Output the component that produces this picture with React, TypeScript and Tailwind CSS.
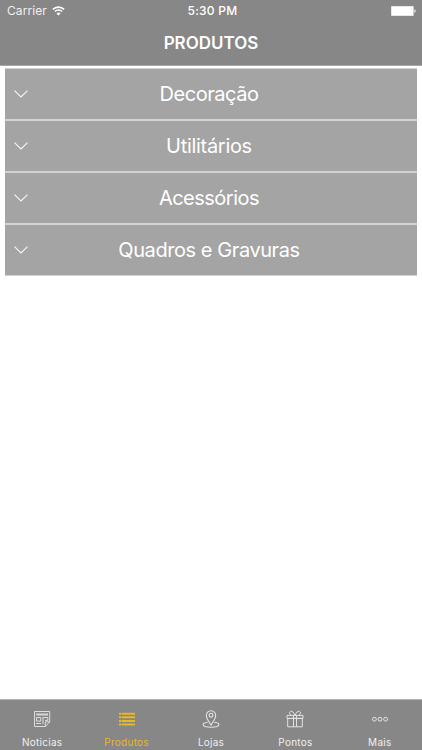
import React from "react";

interface Category {
  name: string;
  className: string;
}

interface Tab {
  label: string;
  icon: React.ReactNode;
  active?: boolean;
}

const WifiIcon = () => (
  <svg width="13" height="10" viewBox="0 0 13 10" fill="none" stroke="white">
    <path d="M0.9 3.4a8 8 0 0 1 11.2 0" strokeWidth="1.6" />
    <path d="M2.9 5.5a5.1 5.1 0 0 1 7.2 0" strokeWidth="1.5" />
    <path d="M6.5 9.4L4.5 7.4a2.9 2.9 0 0 1 4 0z" fill="white" stroke="none" />
  </svg>
);

const BatteryIcon = () => (
  <svg width="25" height="10" viewBox="0 0 25 10" fill="white">
    <rect x="0" y="0" width="22.8" height="10" rx="0.8" opacity="0.75" />
    <rect x="0.8" y="0.8" width="21.2" height="8.4" />
    <path d="M23.4 3.2c1.6.5 1.6 3.1 0 3.6z" />
  </svg>
);

const ChevronIcon = () => (
  <svg width="14" height="8" viewBox="0 0 14 8" fill="none" stroke="white" strokeOpacity="0.9">
    <path d="M0.5 0.6L7 7l6.5-6.4" strokeWidth="1.15" />
  </svg>
);

const NewsIcon = () => (
  <svg width="18" height="18" viewBox="0 0 18 18" fill="none" stroke="#e6e6e6" strokeWidth="0.9">
    <path d="M1.5 1.5h15.2v10.4l-4.4 4.6H1.5z" />
    <path d="M16.7 11.9h-4.4v4.6" />
    <path d="M3.2 4.5h11.8" strokeWidth="2" strokeOpacity="0.85" />
    <path d="M3.5 7.5h4.3v3.6H3.5zM3 13.5h5.2M10 7v7.2M10 7.5h4.8v2.9H12" />
  </svg>
);

const ListIcon = () => (
  <svg width="18" height="18" viewBox="0 0 18 18" stroke="#e6b928" strokeWidth="2">
    <path d="M1 3.7h2.2M3.8 3.7H17M1 7.3h2.2M3.8 7.3H17M1 11h2.2M3.8 11H17M1 14.6h2.2M3.8 14.6H17" />
  </svg>
);

const PinIcon = () => (
  <svg width="18" height="18" viewBox="0 0 18 18" fill="none" stroke="#e6e6e6" strokeWidth="1.05">
    <path d="M9 14.9C7.2 12 4.3 8.6 4.3 5.4a4.7 4.7 0 0 1 9.4 0C13.7 8.6 10.8 12 9 14.9z" />
    <circle cx="9" cy="5.2" r="1.9" />
    <path d="M5.7 12.2c-2.7.3-4.6 1.1-4.6 2.3 0 1.6 3.5 2.7 7.9 2.7s7.9-1.1 7.9-2.7c0-1.2-1.9-2-4.6-2.3" />
  </svg>
);

const GiftIcon = () => (
  <svg width="18" height="18" viewBox="0 0 18 18" fill="none" stroke="#e6e6e6" strokeWidth="0.95">
    <path d="M1 5.4h16v3H1zM1.7 8.4h14.6v8.4H1.7zM7.5 5.4v11.4M10.5 5.4v11.4" />
    <path d="M8.7 5.2C8.1 2.4 6.2.8 4.5 1.4 2.9 2 3.4 4.5 5 5.2M9.3 5.2c.6-2.8 2.5-4.4 4.2-3.8 1.6.6 1.1 3.1-.5 3.8" />
  </svg>
);

const MoreIcon = () => (
  <svg width="18" height="18" viewBox="0 0 18 18" fill="none" stroke="#e6e6e6" strokeWidth="1">
    <circle cx="3.4" cy="9.2" r="1.9" />
    <circle cx="9" cy="9.2" r="1.9" />
    <circle cx="14.6" cy="9.2" r="1.9" />
  </svg>
);

const categories: Category[] = [
  { name: "Decoração", className: "tracking-[-0.48px]" },
  { name: "Utilitários", className: "tracking-[-0.3px]" },
  { name: "Acessórios", className: "tracking-[-0.5px]" },
  { name: "Quadros e Gravuras", className: "tracking-[-0.43px]" },
];

const tabs: Tab[] = [
  { label: "Noticias", icon: <NewsIcon /> },
  { label: "Produtos", icon: <ListIcon />, active: true },
  { label: "Lojas", icon: <PinIcon /> },
  { label: "Pontos", icon: <GiftIcon /> },
  { label: "Mais", icon: <MoreIcon /> },
];

const StatusBar = () => (
  <div className="grid h-[22px] grid-cols-3 items-center pr-[6px] pl-[7px] text-[12px] leading-none">
    <div className="flex items-center gap-[5px]">
      <span className="tracking-[0.08px] text-[#f0f0f0]">Carrier</span>
      <WifiIcon />
    </div>
    <span className="pl-[2px] text-center font-medium tracking-[0.25px]">5:30 PM</span>
    <div className="flex justify-end">
      <BatteryIcon />
    </div>
  </div>
);

const App: React.FC = () => {
  return (
    <div className="flex h-[750px] w-[422px] flex-col bg-white font-['Inter',sans-serif] text-white">
      {/* Header */}
      <header className="h-[66px] shrink-0 border-b border-[#a9a9a9] bg-[#878787]">
        <StatusBar />
        <h1 className="flex h-[43px] items-center justify-center text-[17px] font-semibold">
          PRODUTOS
        </h1>
      </header>

      {/* Categories */}
      <main className="flex-1 px-[5px] pt-[2px]">
        {categories.map((category) => (
          <button
            key={category.name}
            className="grid h-[52px] w-full grid-cols-[32px_1fr_36px] items-center border-t border-b border-t-[#d2d2d2] border-b-[#d2d2d2] bg-[#a4a4a4]"
          >
            <span className="flex justify-center">
              <ChevronIcon />
            </span>
            <span className={`text-[20px] ${category.className}`}>{category.name}</span>
          </button>
        ))}
      </main>

      {/* Tab bar */}
      <nav className="grid h-[51px] shrink-0 grid-cols-5 border-t border-[#b4b4b4] bg-[#878787]">
        {tabs.map((tab) => (
          <div
            key={tab.label}
            className={`flex flex-col items-center pt-[10px] ${tab.active ? "text-[#e6b928]" : "text-[#f0f0f0]"}`}
          >
            {tab.icon}
            <span className="mt-[8px] text-[10px] leading-[12px] tracking-[0.25px]">{tab.label}</span>
          </div>
        ))}
      </nav>
    </div>
  );
};

export default App;
